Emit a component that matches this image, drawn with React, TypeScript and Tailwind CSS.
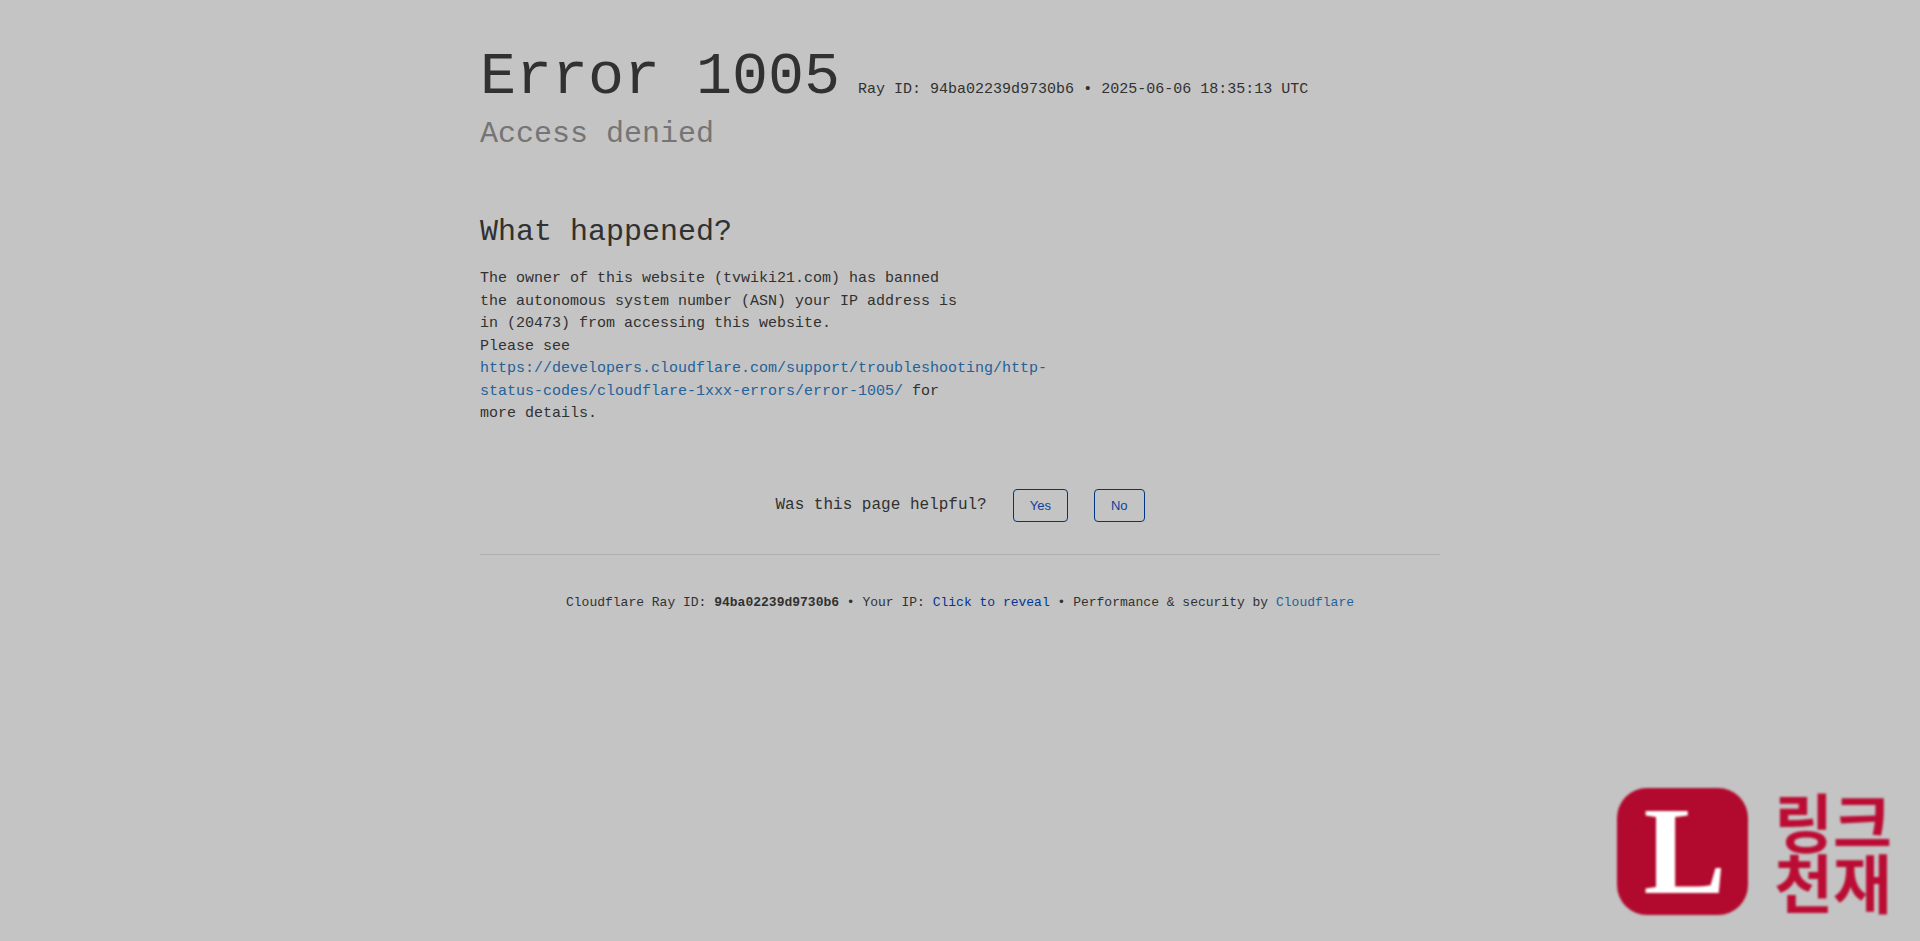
import React from "react";

interface ErrorDetails {
  code: number;
  rayId: string;
  timestamp: string;
  message: string;
  docsUrl: string;
}

const error: ErrorDetails = {
  code: 1005,
  rayId: "94ba02239d9730b6",
  timestamp: "2025-06-06 18:35:13 UTC",
  message:
    "The owner of this website (tvwiki21.com) has banned the autonomous system number (ASN) your IP address is in (20473) from accessing this website.",
  docsUrl:
    "https://developers.cloudflare.com/support/troubleshooting/http-status-codes/cloudflare-1xxx-errors/error-1005/",
};

const ErrorHeader: React.FC = () => (
  <header>
    <div className="flex flex-wrap items-baseline gap-x-[18px]">
      <h1 className="text-[60px] leading-[75px]">Error {error.code}</h1>
      <span className="text-[15px] leading-normal">
        Ray ID: {error.rayId} • {error.timestamp}
      </span>
    </div>
    <h2 className="text-3xl leading-[39px] text-[#757575]">Access denied</h2>
  </header>
);

const Feedback: React.FC = () => (
  <div className="mt-[63px] flex items-center justify-center gap-[26px] border-b border-[#b0b0b0] pb-8">
    <span className="text-base">Was this page helpful?</span>
    {["Yes", "No"].map((label) => (
      <button
        key={label}
        type="button"
        className="cursor-pointer rounded border border-[#003681] px-4 py-2 font-['Liberation_Sans',sans-serif] text-[13px] leading-[15px] text-[#0d3f9c]"
      >
        {label}
      </button>
    ))}
  </div>
);

const Footer: React.FC = () => (
  <footer className="py-[38px] text-center text-[13px] leading-5">
    Cloudflare Ray ID: <strong className="font-bold">{error.rayId}</strong> •
    Your IP:{" "}
    <button type="button" className="cursor-pointer text-[#003694]">
      Click to reveal
    </button>{" "}
    • Performance &amp; security by{" "}
    <a href="https://www.cloudflare.com" className="text-[#246199]">
      Cloudflare
    </a>
  </footer>
);

// Floating site mark in the bottom right corner
const BrandMark: React.FC = () => (
  <div className="fixed right-7 bottom-[26px] flex items-center gap-[26px] blur-[1px]">
    <div className="flex h-[127px] w-[131px] items-center justify-center rounded-[30px] bg-[#b20a2e] pl-1 font-['Liberation_Serif',serif] text-[124px] leading-none font-bold text-white">
      L
    </div>
    <div className="pb-1 font-['Noto_Sans_CJK_KR',sans-serif] text-[64px] leading-[61px] font-bold text-[#bb0d34]">
      <div>링크</div>
      <div>천재</div>
    </div>
  </div>
);

export default function App() {
  return (
    <div className="min-h-screen bg-[#c4c4c4] font-['Liberation_Mono',monospace] text-[#313131]">
      <main className="mx-auto max-w-[960px] pt-10">
        <ErrorHeader />

        <section className="mt-[59px] text-[15px] leading-normal">
          <h2 className="mb-4 text-3xl leading-[39px]">What happened?</h2>
          <div className="w-1/2">
            <p>{error.message}</p>
            <p>
              Please see{" "}
              <a href={error.docsUrl} className="text-[#246199]">
                {error.docsUrl}
              </a>{" "}
              for more details.
            </p>
          </div>
        </section>

        <Feedback />
        <Footer />
      </main>
      <BrandMark />
    </div>
  );
}
